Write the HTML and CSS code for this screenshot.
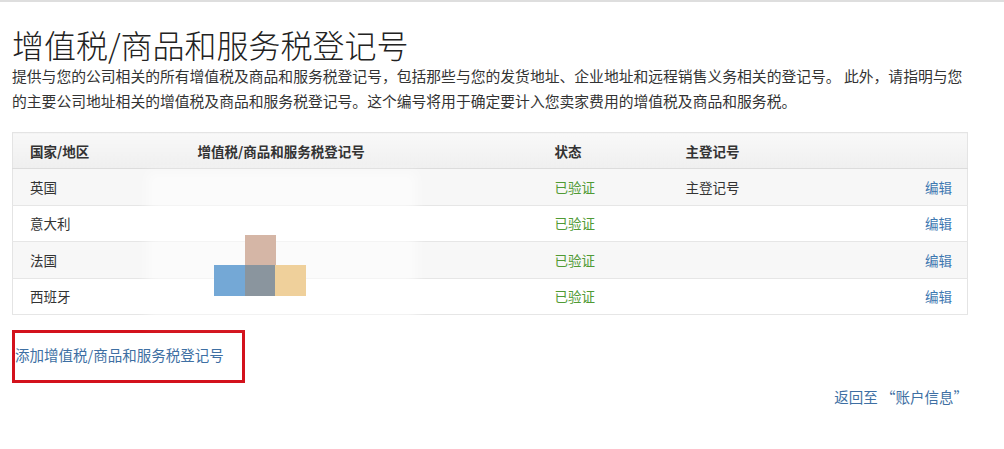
FILE: index.html
```html
<!DOCTYPE html>
<html lang="zh-CN">
<head>
<meta charset="utf-8">
<title>增值税/商品和服务税登记号</title>
<link rel="stylesheet" href="styles.css">
</head>
<body>
<div class="topline"></div>
<main class="page">
  <h1 class="title">增值税/商品和服务税登记号</h1>
  <p class="desc">提供与您的公司相关的所有增值税及商品和服务税登记号，包括那些与您的发货地址、企业地址和远程销售义务相关的登记号。 此外，请指明与您<br>的主要公司地址相关的增值税及商品和服务税登记号。这个编号将用于确定要计入您卖家费用的增值税及商品和服务税。</p>

  <div class="table-wrap">
    <table class="reg-table">
      <colgroup>
        <col class="c1"><col class="c2"><col class="c3"><col class="c4"><col class="c5">
      </colgroup>
      <thead>
        <tr><th>国家/地区</th><th>增值税/商品和服务税登记号</th><th>状态</th><th>主登记号</th><th></th></tr>
      </thead>
      <tbody>
        <tr class="odd"><td>英国</td><td></td><td class="ok">已验证</td><td>主登记号</td><td class="edit"><a href="#">编辑</a></td></tr>
        <tr><td>意大利</td><td></td><td class="ok">已验证</td><td></td><td class="edit"><a href="#">编辑</a></td></tr>
        <tr class="odd"><td>法国</td><td></td><td class="ok">已验证</td><td></td><td class="edit"><a href="#">编辑</a></td></tr>
        <tr><td>西班牙</td><td></td><td class="ok">已验证</td><td></td><td class="edit"><a href="#">编辑</a></td></tr>
      </tbody>
    </table>
    <div class="blur"></div>
    <div class="mosaic">
      <span class="sq tan"></span>
      <span class="sq blue"></span>
      <span class="sq gray"></span>
      <span class="sq yellow"></span>
    </div>
  </div>

  <div class="add-box"><a href="#" class="link">添加增值税/商品和服务税登记号</a></div>

  <div class="back"><a href="#" class="link">返回至 “账户信息”</a></div>
</main>
</body>
</html>
```

FILE: styles.css
```css
html, body {
  margin: 0;
  padding: 0;
  background: #ffffff;
}
body {
  font-family: "Noto Sans CJK SC", "Noto Sans", "Liberation Sans", sans-serif;
  color: #333333;
}
.topline {
  height: 2px;
  background: #dedede;
}
.page {
  padding: 0 36px 0 12px;
}
.title {
  margin: 23px 0 0;
  font-size: 32px;
  line-height: 38px;
  font-weight: 300;
  color: #222222;
}
.desc {
  margin: 0;
  font-size: 14.8px;
  line-height: 25px;
  color: #333333;
  white-space: nowrap;
}
.table-wrap {
  position: relative;
  margin-top: 19px;
  width: 956px;
}
.reg-table {
  width: 956px;
  border-collapse: collapse;
  table-layout: fixed;
  border: 1px solid #e4e4e4;
  font-size: 13.5px;
}
.c1 { width: 185px; }
.c2 { width: 357px; }
.c3 { width: 131px; }
.c4 { width: 180px; }
.reg-table th,
.reg-table td {
  height: 35.5px;
  padding: 0;
  text-align: left;
  vertical-align: middle;
  border-bottom: 1px solid #e6e6e6;
  white-space: nowrap;
}
.reg-table th {
  height: 35px;
  font-weight: 700;
  color: #333333;
  background: linear-gradient(#f8f8f8, #efefef);
  border-bottom: 1px solid #dcdcdc;
}
.reg-table th:first-child,
.reg-table td:first-child {
  padding-left: 17px;
}
.reg-table tr.odd td {
  background: #f7f7f7;
}
.reg-table td.ok {
  color: #4f9a34;
}
.reg-table td.edit {
  text-align: right;
  padding-right: 15px;
}
.reg-table td.edit a {
  color: #3e78b1;
  text-decoration: none;
}
.blur {
  position: absolute;
  left: 135px;
  top: 40px;
  width: 270px;
  height: 150px;
  background: rgba(255, 255, 255, 0.55);
  filter: blur(6px);
}
.mosaic {
  position: absolute;
  left: 202px;
  top: 103px;
  width: 92px;
  height: 61px;
}
.sq {
  position: absolute;
  width: 31px;
  height: 31px;
}
.sq.tan { left: 31px; top: 0; background: #d5b6a6; }
.sq.blue { left: 0; top: 30px; background: #74a8d6; }
.sq.gray { left: 31px; top: 30px; background: #8a959e; }
.sq.yellow { left: 61px; top: 30px; background: #efd09b; }
.add-box {
  margin-top: 15px;
  width: 227px;
  height: 47px;
  border: 3px solid #d3121c;
  display: flex;
  align-items: center;
}
.add-box .link {
  font-size: 14.5px;
  line-height: 20px;
  margin-top: -3px;
}
.link {
  color: #3e6fa3;
  text-decoration: none;
}
.back {
  margin-top: 4px;
  width: 956px;
  text-align: right;
  font-size: 14.5px;
  line-height: 20px;
}
```
